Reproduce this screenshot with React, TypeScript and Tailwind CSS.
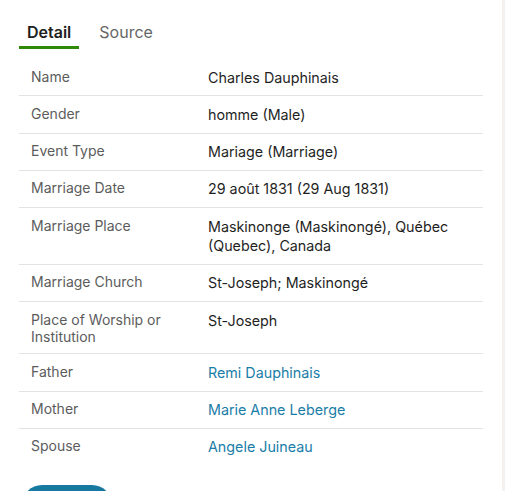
import { useState } from "react";

type Row = { label: string; value: string; link?: boolean };

const rows: Row[] = [
  { label: "Name", value: "Charles Dauphinais" },
  { label: "Gender", value: "homme (Male)" },
  { label: "Event Type", value: "Mariage (Marriage)" },
  { label: "Marriage Date", value: "29 août 1831 (29 Aug 1831)" },
  { label: "Marriage Place", value: "Maskinonge (Maskinongé), Québec (Quebec), Canada" },
  { label: "Marriage Church", value: "St-Joseph; Maskinongé" },
  { label: "Place of Worship or Institution", value: "St-Joseph" },
  { label: "Father", value: "Remi Dauphinais", link: true },
  { label: "Mother", value: "Marie Anne Leberge", link: true },
  { label: "Spouse", value: "Angele Juineau", link: true },
];

export default function App() {
  const [tab, setTab] = useState("detail");

  return (
    <div className="flex h-[491px] overflow-hidden bg-white font-['Inter',sans-serif]">
      <div className="w-[502px] pl-[19px] pr-[19px] pt-[20px]">
        {/* Tabs */}
        <div className="flex gap-3">
          <button
            onClick={() => setTab("detail")}
            className={
              tab === "detail"
                ? "border-b-[3px] border-[#2f8a08] px-2 pb-[2px] text-[16px] leading-6 font-semibold text-[#202020]"
                : "border-b-[3px] border-transparent px-2 pb-[2px] text-[16px] leading-6 text-[#666]"
            }
          >
            Detail
          </button>
          <button
            onClick={() => setTab("source")}
            className={
              tab === "source"
                ? "border-b-[3px] border-[#2f8a08] px-2 pb-[2px] text-[16px] leading-6 font-semibold text-[#202020]"
                : "border-b-[3px] border-transparent px-2 pb-[2px] text-[16px] leading-6 text-[#666]"
            }
          >
            Source
          </button>
        </div>

        {/* Detail table */}
        <div className="mt-[10px]">
          {rows.map((row, i) => (
            <div
              key={row.label}
              className={
                i < rows.length - 1
                  ? "flex border-b border-[#e3e3e3]"
                  : "flex"
              }
            >
              <div className="w-[189px] shrink-0 py-[8.5px] pl-[12px] pr-4 text-[14px] leading-[17px] text-[#5c5c5c]">
                {row.label}
              </div>
              <div
                className={
                  row.link
                    ? "flex-1 py-[8.5px] pr-3 text-[14.3px] leading-[19.33px] text-[#1a7da8]"
                    : "flex-1 py-[8.5px] pr-3 text-[14.3px] leading-[19.33px] text-[#1f1f1f]"
                }
              >
                {row.value}
              </div>
            </div>
          ))}
        </div>

        {/* button below the fold, label not visible in view */}
        <button
          aria-label="Attach"
          className="mt-[20px] ml-[3px] block h-[40px] w-[90px] rounded-full bg-[#17799f]"
        />
      </div>
      <div className="flex-1 bg-[#f4f1ee]" />
    </div>
  );
}
